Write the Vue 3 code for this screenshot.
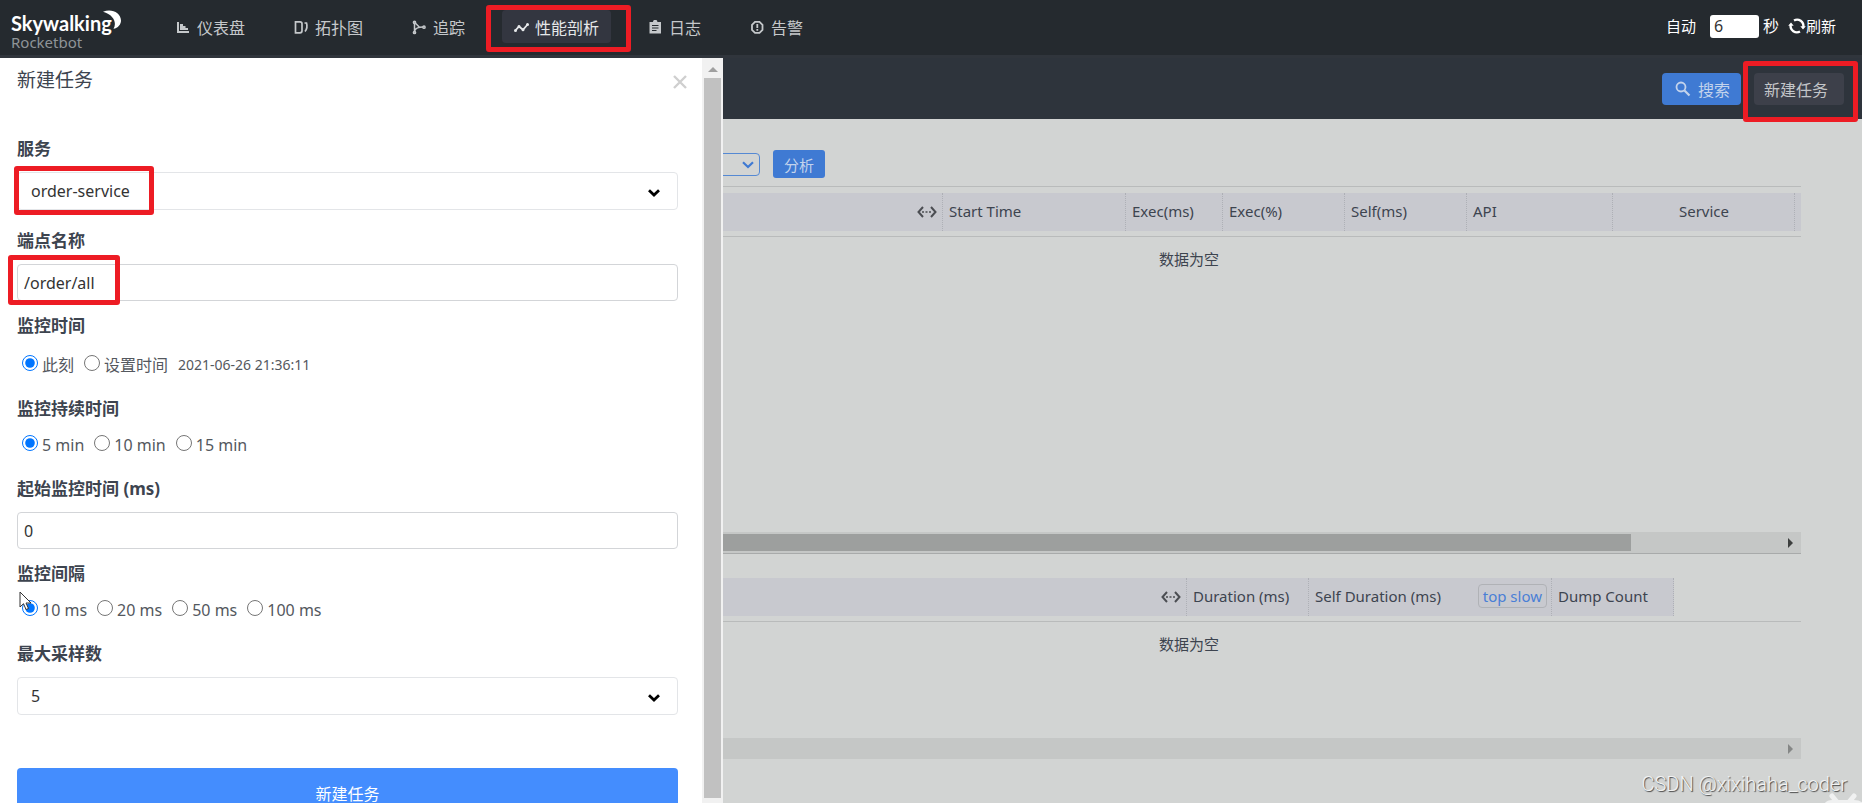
<script setup>
import { ref } from 'vue'

const nav = [
  { id: 'dashboard', label: '仪表盘' },
  { id: 'topology', label: '拓扑图' },
  { id: 'trace', label: '追踪' },
  { id: 'profile', label: '性能剖析', active: true },
  { id: 'log', label: '日志' },
  { id: 'alarm', label: '告警' },
]
const seconds = ref('6')
const service = ref('order-service')
const endpoint = ref('/order/all')
const monitorTime = ref('now')
const duration = ref('5 min')
const startMs = ref('0')
const interval = ref('10 ms')
const maxSample = ref('5')
const durations = ['5 min', '10 min', '15 min']
const intervals = ['10 ms', '20 ms', '50 ms', '100 ms']
</script>

<template>
  <div class="app">
    <header class="top">
      <a class="logo" href="#">
        <span class="brand">Skywalking</span>
        <svg class="moon" viewBox="0 0 20 20"><path d="M2 1.800C10-2 20 2.500 20 10.500C20 14.500 17 18 12.500 18.800C16 13 13 5 2 1.800Z" fill="#fff" /></svg>
        <span class="sub">Rocketbot</span>
      </a>
      <nav class="nav">
        <a v-for="n in nav" :key="n.id" href="#" class="nav-item" :class="{ active: n.active }">
          <svg class="ni" viewBox="0 0 15 15" fill="none" stroke="currentColor">
            <g v-if="n.id === 'dashboard'" fill="currentColor" stroke="none">
              <path d="M1 2h2v9h10v2H1z" /><path d="M4 10V4h3v2h2.500v2H12v2z" />
            </g>
            <g v-else-if="n.id === 'topology'" stroke-width="1.700">
              <path d="M1.500 1.800h4.500a2 2 0 0 1 2 2v7a2 2 0 0 1-2 2H1.500z" /><path d="M10.500 3h2q1.500 5-1.500 8.500" />
            </g>
            <g v-else-if="n.id === 'trace'" stroke-width="1.500">
              <path d="M2.500 2.500v10M2.500 11c1-3 4-4 8.500-4M3 2.800l4.500 4.500" /><circle cx="2.500" cy="2.300" r="1.100" /><circle cx="2.500" cy="12.500" r="1.100" /><circle cx="12" cy="7.200" r="1.100" />
            </g>
            <g v-else-if="n.id === 'profile'" stroke-width="1.800">
              <path d="M1 10.800L5 6.500l4 3.300L14 4" /><circle cx="1.500" cy="10.500" r=".6" /><circle cx="5" cy="6.500" r=".6" /><circle cx="9" cy="9.800" r=".6" /><circle cx="13.500" cy="4.500" r=".6" />
            </g>
            <g v-else-if="n.id === 'log'">
              <path d="M1.500 2h3.500a2.200 2.200 0 0 1 4.400 0H13v11.500H1.500z" fill="currentColor" stroke="none" /><path d="M4 5.500h6.500M4 8h6.500M4 10.500h4.500" stroke="#252a2f" stroke-width="1.200" />
            </g>
            <g v-else stroke-width="1.800">
              <path d="M5 1.800h4.500L12.500 4.800v5L9.500 12.800H5L2 9.800v-5z" /><path d="M7.300 4v4M7.300 9v1.800" />
            </g>
          </svg>
          <span>{{ n.label }}</span>
          <i v-if="n.active" class="mark mark-nav"></i>
        </a>
      </nav>
      <div class="auto">
        <label for="sec">自动</label>
        <input id="sec" v-model="seconds" class="sec" type="text" />
        <span class="unit">秒</span>
        <button class="reload" type="button">
          <svg viewBox="0 0 18 18" fill="none" stroke="#fff" stroke-width="2.400">
            <path d="M6 3.500A6.300 6.300 0 0 1 15.300 10M12 14.500A6.300 6.300 0 0 1 2.700 8" /><path d="M12.300 9.200h5.500l-2.800 3.300zM.2 8.800h5.500L3 5.500z" fill="#fff" stroke="none" />
          </svg>刷新
        </button>
      </div>
    </header>

    <div class="body">
      <div class="toolbar">
        <button class="btn-search" type="button">
          <svg viewBox="0 0 16 16" fill="none" stroke="currentColor" stroke-width="1.800"><circle cx="6" cy="6" r="4.500" /><path d="M9.500 9.500l5 5" stroke-width="2.200" /></svg>
          <span>搜索</span>
        </button>
        <button class="btn-new" type="button">新建任务<i class="mark mark-new"></i></button>
      </div>

      <main class="main">
        <div class="filter">
          <div class="pick">
            <select aria-label="Trace segment"><option></option></select>
            <svg viewBox="0 0 12 8" fill="none" stroke="#3f7ad3" stroke-width="2.200"><path d="M1 1.300l5 4.700 5-4.700" /></svg>
          </div>
          <button class="btn-analyze" type="button">分析</button>
        </div>

        <section class="grid first">
          <div class="head-wrap">
            <table class="tbl">
              <colgroup><col /><col class="w183" /><col class="w97" /><col class="w122" /><col class="w122" /><col class="w146" /><col class="w182" /><col class="w6" /></colgroup>
              <thead>
                <tr>
                  <th class="drag"><svg viewBox="0 0 20 12" fill="none" stroke="#4b4d52" stroke-width="2"><path d="M6 1L1.500 6 6 11M14 1l4.500 5L14 11" /><path d="M5 6h10" stroke-dasharray="2 1.500" stroke-width="1.600" /></svg></th>
                  <th>Start Time</th><th>Exec(ms)</th><th>Exec(%)</th><th>Self(ms)</th><th>API</th><th class="mid">Service</th><th class="end"></th>
                </tr>
              </thead>
            </table>
          </div>
          <div class="empty">数据为空</div>
          <div class="hbar"><div class="thumb"></div><svg viewBox="0 0 6 10"><path d="M0 0l5 5-5 5z" fill="#3d3f3e" /></svg></div>
        </section>

        <section class="grid second">
          <div class="head-wrap">
            <table class="tbl">
              <colgroup><col /><col class="w122" /><col class="w243" /><col class="w122" /></colgroup>
              <thead>
                <tr>
                  <th class="drag"><svg viewBox="0 0 20 12" fill="none" stroke="#4b4d52" stroke-width="2"><path d="M6 1L1.500 6 6 11M14 1l4.500 5L14 11" /><path d="M5 6h10" stroke-dasharray="2 1.500" stroke-width="1.600" /></svg></th>
                  <th>Duration (ms)</th>
                  <th><div class="split"><span>Self Duration (ms)</span><button class="slow" type="button">top slow</button></div></th>
                  <th>Dump Count</th>
                </tr>
              </thead>
            </table>
          </div>
          <div class="empty">数据为空</div>
          <div class="hbar"><svg viewBox="0 0 6 10"><path d="M0 0l5 5-5 5z" fill="#858786" /></svg></div>
        </section>
      </main>

      <aside class="drawer">
        <form class="form" @submit.prevent>
          <div class="title">
            <h2>新建任务</h2>
            <button class="close" type="button" aria-label="关闭"><svg viewBox="0 0 14 14" stroke="#cfcfcf" stroke-width="2.400"><path d="M1 1l12 12M13 1L1 13" /></svg></button>
          </div>

          <div class="field choose">
            <label class="name" for="svc">服务</label>
            <div class="sel">
              <select id="svc" v-model="service"><option>order-service</option></select>
              <svg viewBox="0 0 12 8" fill="none" stroke="#000" stroke-width="2.800"><path d="M1 1.300l5 4.700 5-4.700" /></svg>
              <i class="mark mark-svc"></i>
            </div>
          </div>
          <div class="field text">
            <label class="name" for="ep">端点名称</label>
            <div class="inp"><input id="ep" v-model="endpoint" type="text" /><i class="mark mark-ep"></i></div>
          </div>
          <fieldset class="field radio time">
            <legend class="name">监控时间</legend>
            <div class="row">
              <label><input v-model="monitorTime" type="radio" name="mt" value="now" />此刻</label>
              <label><input v-model="monitorTime" type="radio" name="mt" value="set" />设置时间</label>
              <span class="date">2021-06-26 21:36:11</span>
            </div>
          </fieldset>
          <fieldset class="field radio">
            <legend class="name">监控持续时间</legend>
            <div class="row">
              <label v-for="d in durations" :key="d"><input v-model="duration" type="radio" name="du" :value="d" />{{ d }}</label>
            </div>
          </fieldset>
          <div class="field text">
            <label class="name" for="st">起始监控时间 (ms)</label>
            <div class="inp"><input id="st" v-model="startMs" type="text" /></div>
          </div>
          <fieldset class="field radio">
            <legend class="name">监控间隔</legend>
            <div class="row">
              <label v-for="d in intervals" :key="d"><input v-model="interval" type="radio" name="iv" :value="d" />{{ d }}</label>
              <svg class="cursor" viewBox="0 0 13 20"><path d="M1 1v15l3.500-3.300L7 18.500l2.500-1L7 12h5z" fill="#fff" stroke="#333" /></svg>
            </div>
          </fieldset>
          <div class="field choose">
            <label class="name" for="mx">最大采样数</label>
            <div class="sel">
              <select id="mx" v-model="maxSample"><option>5</option></select>
              <svg viewBox="0 0 12 8" fill="none" stroke="#000" stroke-width="2.800"><path d="M1 1.300l5 4.700 5-4.700" /></svg>
            </div>
          </div>
          <button class="submit" type="submit">新建任务</button>
        </form>
        <div class="vbar">
          <svg viewBox="0 0 10 6"><path d="M0 6l5-5 5 5z" fill="#a0a0a0" /></svg>
          <div class="vthumb"></div>
        </div>
      </aside>
    </div>

    <div class="watermark">CSDN @xixihaha_coder</div>
    <svg class="burst" viewBox="0 0 40 10" fill="none" stroke="#f0f1f1" stroke-linecap="round" stroke-width="5"><path d="M10 3l5 6M32 3l-5 6" /><path d="M4 11q2-2.500 6-2.500h22q5 0 8 2.500" stroke-width="3" /></svg>
  </div>
</template>

<style>
html, body { margin: 0; }
</style>

<style scoped>
* { box-sizing: border-box; }
.app {
  position: relative;
  display: flex;
  flex-direction: column;
  height: 100vh;
  overflow: hidden;
  background: #d2d4d3;
  color: #3d444f;
  font: 16px/24px "Noto Sans", "Noto Sans CJK SC", sans-serif;
}
button, input, select { font: inherit; color: inherit; margin: 0; }
button { border: 0; padding: 0; cursor: pointer; }
a { color: inherit; text-decoration: none; }
svg { display: block; flex: none; }

.mark {
  position: absolute;
  border: 5px solid #ed1c24;
  border-radius: 3px;
  pointer-events: none;
  z-index: 5;
}
.mark-nav { inset: -5px -20px -9px -16px; }
.mark-new { inset: -12px -14px -17px -11px; }
.mark-svc { top: -6px; left: -3px; width: 140px; height: 49px; }
.mark-ep { top: -9px; left: -9px; width: 112px; height: 50px; }

.top {
  flex: none;
  display: flex;
  align-items: flex-start;
  height: 58px;
  padding: 0 26px 0 11px;
  background: #252a2f;
  border-bottom: 3px solid #30353c;
  color: #fff;
}
.logo { position: relative; display: flex; flex-direction: column; width: 153px; padding-top: 12px; }
.brand { font: bold 20px/22px Lato, sans-serif; }
.sub { font-size: 15px; line-height: 16px; color: #8f9498; }
.moon { position: absolute; left: 90px; top: 10px; width: 20px; height: 20px; }
.nav { display: flex; gap: 25px; padding-top: 10px; color: #c5c8cb; }
.nav-item { position: relative; display: flex; align-items: center; gap: 6px; height: 33px; padding: 2px 12px 0; border-radius: 4px; }
.nav-item.active { background: #333640; color: #e6e8ea; }
.ni { width: 15px; height: 15px; }
.auto { display: flex; align-items: center; margin-left: auto; padding-top: 14px; font-size: 15px; }
.sec { width: 49px; height: 23px; margin: 0 4px 0 14px; padding: 0 4px; border: 0; border-radius: 3px; background: #fff; color: #333; font-size: 16px; }
.unit { font-size: 16px; }
.reload { display: flex; align-items: center; margin-left: 9px; background: none; font-size: 15px; }
.reload svg { width: 18px; height: 18px; }

.body { position: relative; flex: 1; min-height: 0; }
.toolbar { display: flex; justify-content: flex-end; gap: 13px; height: 61px; padding: 15px 18px 0 0; background: #2e343c; }
.btn-search { display: flex; align-items: center; gap: 7px; height: 32px; padding: 2px 11px 0 13px; border-radius: 4px; background: #3f7ad3; color: #c3d3ec; }
.btn-search svg { width: 16px; height: 16px; margin-bottom: 2px; }
.btn-new { position: relative; height: 32px; padding: 1px 16px 0 10px; border-radius: 4px; background: #3d404a; color: #c3c5c8; }

.main { padding: 31px 61px 0 577px; }
.filter { display: flex; align-items: center; gap: 13px; height: 28px; margin-bottom: 8px; }
.pick { position: relative; width: 183px; height: 23px; }
.pick select { width: 100%; height: 100%; appearance: none; border: 1px solid #5589d3; border-radius: 4px; background: transparent; }
.pick svg { position: absolute; right: 6px; top: 8px; width: 12px; height: 8px; }
.btn-analyze { width: 52px; height: 28px; padding-top: 2px; border-radius: 3px; background: #3f7ad3; color: #c3d3ec; font-size: 15px; }

.grid { display: flex; flex-direction: column; }
.first { height: 368px; border-top: 1px solid #b9bbbb; border-bottom: 1px solid #a8aaaa; padding-top: 6px; margin-bottom: 24px; }
.second { height: 181px; }
.head-wrap { padding-bottom: 5px; border-bottom: 1px solid #b9bbbb; }
.tbl { width: 100%; table-layout: fixed; border-collapse: separate; border-spacing: 0; background: #c8c9cf; }
.second .tbl { width: calc(100% - 127px); }
.tbl th { height: 38px; padding: 0 5px 2px 6px; border-right: 1px dotted #aeb0b6; text-align: left; font-weight: 400; font-size: 15px; white-space: nowrap; }
.tbl .mid { text-align: center; }
.tbl .end { border: 0; padding: 0; }
.drag svg { width: 20px; height: 12px; margin-top: 2px; margin-left: auto; }
.w183 { width: 183px; }
.w97 { width: 97px; }
.w122 { width: 122px; }
.w146 { width: 146px; }
.w182 { width: 182px; }
.w243 { width: 243px; }
.w6 { width: 6px; }
.split { display: flex; align-items: center; justify-content: space-between; }
.slow { height: 24px; margin-right: -1px; padding: 0 4px; border: 1px solid #b0b2b6; border-radius: 4px; background: transparent; color: #4a7fd6; line-height: 22px; }
.empty { flex: 1; padding-top: 10px; text-align: center; font-size: 15px; }
.hbar { display: flex; align-items: center; justify-content: space-between; height: 21px; padding: 0 7px 0 17px; background: #c5c7c6; }
.hbar svg { width: 6px; height: 10px; margin-left: auto; }
.thumb { width: calc(100% - 163px); height: 17px; background: #9d9f9e; }

.drawer { position: absolute; left: 0; top: 0; bottom: 0; display: flex; width: 723px; background: #fff; overflow: hidden; }
.form { flex: 1; padding: 7px 24px 0 17px; }
.title { display: flex; justify-content: space-between; align-items: center; height: 30px; margin-bottom: 42px; }
.title h2 { margin: 0; font-size: 19px; font-weight: 400; }
.close { width: 14px; height: 14px; margin: 3px -9px 0 0; background: none; }
.close svg { width: 14px; height: 14px; }
.field { display: block; margin: 0; padding: 0; border: 0; min-width: 0; }
.name { display: block; margin-bottom: 11px; padding: 0; font-size: 17px; line-height: 24px; font-weight: 700; }
.choose { margin-bottom: 19px; }
.text { margin-bottom: 13px; }
.radio { margin-bottom: 20px; }
.sel { position: relative; }
.sel select { display: block; width: 100%; height: 38px; padding: 0 13px; appearance: none; border: 1px solid #e3e5e8; border-radius: 4px; background: #fff; color: #333; }
.sel svg { position: absolute; right: 18px; top: 17px; width: 12px; height: 8px; }
.inp { position: relative; }
.inp input { display: block; width: 100%; height: 37px; padding: 0 6px; border: 1px solid #d3d5d8; border-radius: 4px; background: #fff; color: #333; }
.row { position: relative; display: flex; align-items: center; gap: 10px; height: 25px; padding-top: 1px; padding-left: 5px; color: #54585e; }
.time .row { height: 28px; padding-top: 4px; }
.row label { display: flex; align-items: center; gap: 4px; }
.row input { width: 16px; height: 16px; margin: 0 0 4px; accent-color: #0075ff; }
.date { font-size: 14px; }
.cursor { position: absolute; left: 2px; top: -6px; width: 13px; height: 20px; }
.submit { display: block; width: 100%; height: 52px; margin-top: 53px; border-radius: 4px; background: #448dfe; color: #fff; line-height: 16px; }
.vbar { flex: none; display: flex; flex-direction: column; align-items: center; width: 21px; padding: 8px 0 5px; background: #f1f1f1; }
.vbar svg { width: 10px; height: 6px; margin-bottom: 6px; }
.vthumb { flex: 1; width: 17px; background: #c1c1c1; }

.watermark { position: absolute; right: 15px; bottom: 7px; font: 300 20px/24px Roboto, sans-serif; color: #f2f3f3; text-shadow: 1px 1px 1px #444; }
.burst { position: absolute; right: 0; bottom: 0; width: 40px; height: 10px; }
</style>
